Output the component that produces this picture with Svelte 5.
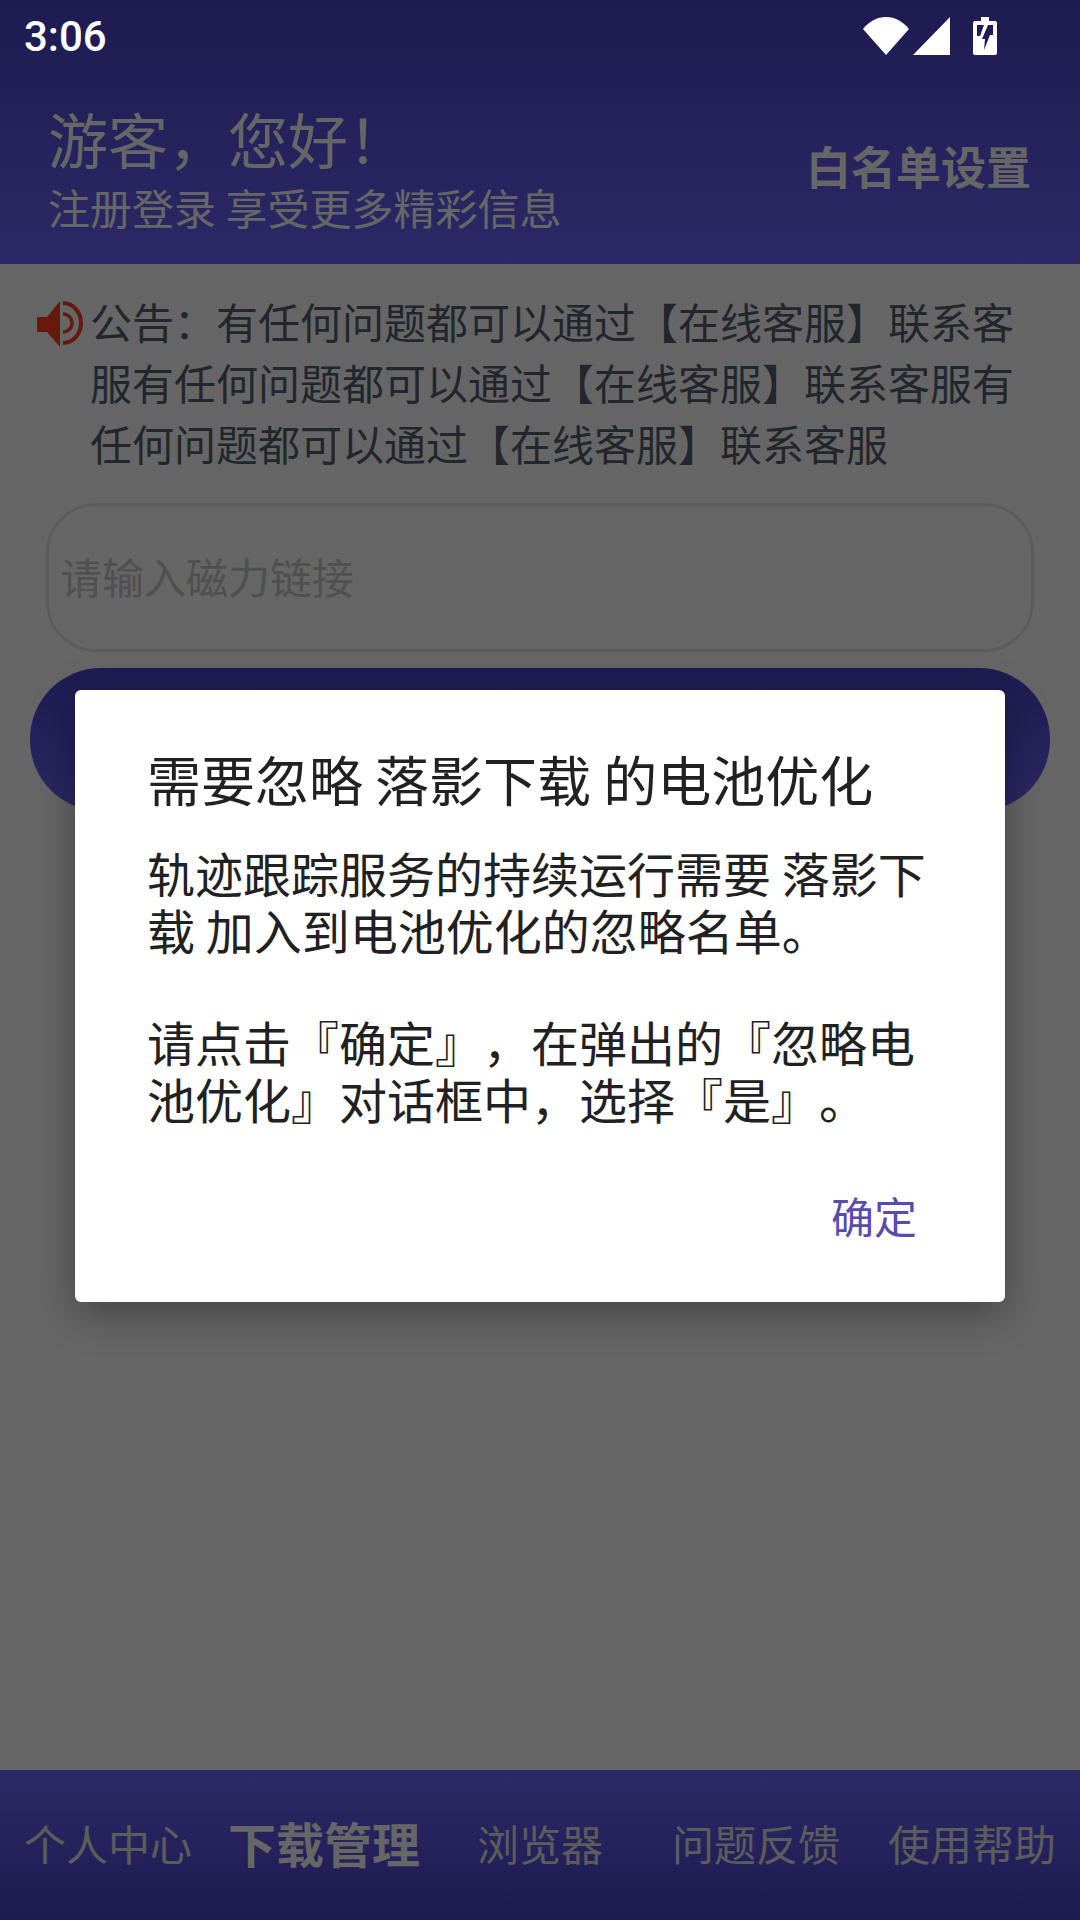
<script>
	const tabs = [
		{ label: "个人中心" },
		{ label: "下载管理", active: true },
		{ label: "浏览器" },
		{ label: "问题反馈" },
		{ label: "使用帮助" },
	];
	const notice =
		"公告：有任何问题都可以通过【在线客服】联系客服有任何问题都可以通过【在线客服】联系客服有任何问题都可以通过【在线客服】联系客服";
</script>

<div class="page">
	<header class="top">
		<div class="status">
			<span class="time">3:06</span>
			<div class="status-icons">
				<svg width="46" height="38" viewBox="0 0 46 38">
					<path d="M0 12C6 4.500 14 0 23 0s17 4.500 23 12L23 38z" fill="#fff" />
				</svg>
				<svg width="38" height="38" viewBox="0 0 38 38">
					<path d="M37 0v38H0z" fill="#fff" />
				</svg>
				<svg class="battery" width="24" height="38" viewBox="0 0 24 38">
					<path
						fill="#fff"
						fill-rule="evenodd"
						d="M8 0h8v4h6a2 2 0 0 1 2 2v30a2 2 0 0 1-2 2H2a2 2 0 0 1-2-2V6a2 2 0 0 1 2-2h6zM4 8v11h3l4-11zm11 0-6 14h3l-1 11 6-15h3V8z"
					/>
				</svg>
			</div>
		</div>
		<div class="welcome">
			<div>
				<h1>游客，您好！</h1>
				<p>注册登录 享受更多精彩信息</p>
			</div>
			<span class="whitelist">白名单设置</span>
		</div>
	</header>

	<main class="content">
		<div class="notice">
			<svg class="horn" width="48" height="48" viewBox="0 0 48 48">
				<path d="M0 17h10L23 1v46L10 32H0z" fill="#ff4020" />
				<path d="M26 14a9 9 0 0 1 0 18" fill="none" stroke="#ff4020" stroke-width="3.500" />
				<path d="M26 3a18 20 0 0 1 0 40" fill="none" stroke="#ff4020" stroke-width="4" />
			</svg>
			<p>{notice}</p>
		</div>
		<div class="input">请输入磁力链接</div>
		<div class="submit"></div>
	</main>

	<nav class="tabs">
		{#each tabs as tab}
			<span class="tab" class:active={tab.active}>{tab.label}</span>
		{/each}
	</nav>

	<div class="scrim"></div>

	<div class="dialog">
		<h2>需要忽略 落影下载 的电池优化</h2>
		<p>轨迹跟踪服务的持续运行需要 落影下载 加入到电池优化的忽略名单。</p>
		<div class="blank"></div>
		<p>请点击『确定』，在弹出的『忽略电池优化』对话框中，选择『是』。</p>
		<div class="actions"><span>确定</span></div>
	</div>
</div>

<style>
	:global(body) {
		margin: 0;
	}

	* {
		box-sizing: border-box;
	}

	.page {
		position: relative;
		width: 1080px;
		height: 1920px;
		display: flex;
		flex-direction: column;
		background: #fff;
		overflow: hidden;
		font-family: "Noto Sans CJK SC", "Noto Sans", sans-serif;
		text-spacing-trim: space-all;
	}

	.top {
		height: 264px;
		background: linear-gradient(#4b44cc, #6d66ff);
		color: #fff;
	}

	.status {
		height: 72px;
		padding: 0 83px 0 24px;
		display: flex;
		align-items: center;
		justify-content: space-between;
	}

	.time {
		font-family: Roboto, sans-serif;
		font-size: 42px;
		font-weight: 500;
		color: #fff;
		position: relative;
		z-index: 3;
	}

	.status-icons {
		display: flex;
		align-items: center;
		gap: 4px;
		position: relative;
		z-index: 3;
	}

	.battery {
		margin-left: 18px;
	}

	.welcome {
		padding: 24px 49px 0 48px;
		display: flex;
		align-items: center;
		justify-content: space-between;
	}

	h1 {
		margin: 3px 0 0;
		font-size: 60px;
		font-weight: 400;
		line-height: 78px;
	}

	.welcome p {
		margin: 2px 0 0;
		font-size: 42px;
		line-height: 56px;
	}

	.whitelist {
		font-size: 45px;
		font-weight: 700;
	}

	.content {
		flex: 1;
		padding: 26px 30px 0;
	}

	.notice {
		display: flex;
		align-items: flex-start;
		gap: 5px;
		padding-left: 7px;
		color: #566070;
	}

	.horn {
		flex: none;
		margin-top: 10px;
	}

	.notice p {
		margin: 0;
		width: 950px;
		font-size: 42px;
		line-height: 61px;
	}

	.input {
		margin: 30px 16px 0;
		height: 149px;
		border: 3px solid #e6e6e6;
		border-radius: 50px;
		padding: 0 0 4px 11px;
		display: flex;
		align-items: center;
		font-size: 42px;
		color: #c8c8c8;
	}

	.submit {
		margin-top: 16px;
		height: 143px;
		border-radius: 71px;
		background: linear-gradient(#4b44cc, #6d66ff);
	}

	.tabs {
		height: 150px;
		padding-bottom: 6px;
		display: grid;
		grid-template-columns: repeat(5, 1fr);
		align-items: center;
		background: linear-gradient(#6d66ff, #4b44cc);
	}

	.tab {
		text-align: center;
		font-size: 42px;
		color: #e6e6e6;
		white-space: nowrap;
	}

	.tab.active {
		font-size: 48px;
		font-weight: 700;
		color: #fff;
	}

	.scrim {
		position: absolute;
		inset: 0;
		background: rgba(0, 0, 0, 0.6);
	}

	.dialog {
		position: absolute;
		left: 75px;
		top: 690px;
		width: 930px;
		height: 612px;
		background: #fff;
		border-radius: 6px;
		padding: 53px 72px 0;
		box-shadow: 0 10px 40px rgba(0, 0, 0, 0.35);
		color: #212121;
	}

	h2 {
		margin: 0 0 29px;
		font-size: 54px;
		font-weight: 400;
		line-height: 72px;
	}

	.dialog p {
		margin: 0;
		font-size: 48px;
		line-height: 57px;
	}

	.blank {
		height: 55px;
	}

	.actions {
		margin-top: 57px;
		margin-right: 16px;
		display: flex;
		justify-content: flex-end;
		font-size: 43px;
		color: #5b4ab0;
	}
</style>
